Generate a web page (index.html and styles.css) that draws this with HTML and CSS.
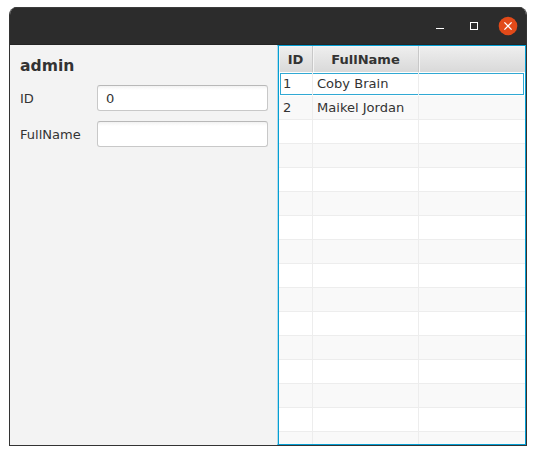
FILE: index.html
```html
<!DOCTYPE html>
<html lang="en">
<head>
<meta charset="utf-8">
<title>admin</title>
<link rel="stylesheet" href="styles.css">
</head>
<body>
<div class="window">
  <header class="titlebar">
    <svg class="controls" width="90" height="20" viewBox="0 0 90 20">
      <path d="M6 10.5h8" stroke="#fff" fill="none"/>
      <rect x="40.5" y="4.500" width="7" height="7" stroke="#fff" fill="none"/>
      <circle cx="78" cy="8" r="9.300" fill="#e24a19"/>
      <path d="M74.400 4.400l7.200 7.200M81.600 4.400l-7.200 7.200" stroke="#fff" stroke-width="1.300" fill="none"/>
    </svg>
  </header>
  <main class="content">
    <form class="form">
      <h1 class="heading">admin</h1>
      <div class="field"><label for="id">ID</label><input id="id" type="text" value="0"></div>
      <div class="field"><label for="name">FullName</label><input id="name" type="text"></div>
    </form>
    <div class="table">
      <div class="row head"><span>ID</span><span>FullName</span><span></span></div>
      <div class="row selected"><span>1</span><span>Coby Brain</span><span></span></div>
      <div class="row"><span>2</span><span>Maikel Jordan</span><span></span></div>
      <div class="row"><span></span><span></span><span></span></div>
      <div class="row"><span></span><span></span><span></span></div>
      <div class="row"><span></span><span></span><span></span></div>
      <div class="row"><span></span><span></span><span></span></div>
      <div class="row"><span></span><span></span><span></span></div>
      <div class="row"><span></span><span></span><span></span></div>
      <div class="row"><span></span><span></span><span></span></div>
      <div class="row"><span></span><span></span><span></span></div>
      <div class="row"><span></span><span></span><span></span></div>
      <div class="row"><span></span><span></span><span></span></div>
      <div class="row"><span></span><span></span><span></span></div>
      <div class="row"><span></span><span></span><span></span></div>
      <div class="row"><span></span><span></span><span></span></div>
      <div class="row"><span></span><span></span><span></span></div>
    </div>
  </main>
</div>
</body>
</html>
```
FILE: styles.css
```css
* { box-sizing: border-box; }
body {
  margin: 0;
  padding: 7px 9px;
  background: #fff;
  color: #333;
  font: 13.05px/24px "DejaVu Sans", sans-serif;
}
.window {
  width: 518px;
  height: 439px;
  border: 1px solid #333;
  border-top: 0;
  border-radius: 8px 8px 0 0;
  overflow: hidden;
  display: flex;
  flex-direction: column;
}
.titlebar {
  height: 38px;
  flex: none;
  background: #2c2c2c;
  border-top: 1px solid #3c3c3c;
  border-bottom: 1px solid #242424;
  display: flex;
  justify-content: flex-end;
}
.controls {
  margin: 10px 6px 0 0;
  overflow: visible;
}
.content {
  flex: 1;
  min-height: 0;
  display: flex;
  background: #f3f3f3;
}
.form {
  width: 267px;
  padding: 11px 9px 0 10px;
}
.heading {
  margin: 0 0 9px;
  font-size: 15.6px;
  line-height: 20px;
}
.field {
  display: flex;
  align-items: center;
  height: 26px;
  margin-bottom: 10px;
}
.field label {
  width: 77px;
  padding-top: 2px;
}
.field input {
  width: 171px;
  height: 26px;
  padding: 1px 8px 0;
  border: 1px solid #c8c8c8;
  border-top-color: #b8b8b8;
  border-radius: 3px;
  background: linear-gradient(#f2f2f2, #fff 4px);
  color: #333;
  font: inherit;
  outline: 0;
}
.table {
  width: 249px;
  height: 400px;
  overflow: hidden;
  border: 1px solid #039ed3;
  border-left-color: #b0dcec;
  box-shadow: inset 1px 0 #039ed3;
  background: #fff;
  padding-left: 1px;
}
.row {
  display: grid;
  grid-template-columns: 34px 106px 106px;
  height: 24px;
  background: #fff;
  position: relative;
}
.row:nth-child(odd) { background: #f9f9f9; }
.row span {
  border-right: 1px solid #ededed;
  border-bottom: 1px solid #ededed;
  padding-left: 4px;
  line-height: 23px;
  white-space: nowrap;
}
.row span:last-child { border-right: 0; }
.row.head {
  height: 26px;
  background: linear-gradient(#efefef, #d9d9d9);
  font-weight: bold;
  text-align: center;
}
.row.head span {
  padding: 0;
  line-height: 27px;
  border-color: #c8c8c8;
  box-shadow: inset 1px 1px #f4f4f4;
}
.row.selected::after {
  content: "";
  position: absolute;
  inset: 1px 1px 1px;
  border: 1px solid #30a9d4;
}
.row.selected span {
  border-bottom-color: #fff;
  position: relative;
  z-index: 1;
}
```
